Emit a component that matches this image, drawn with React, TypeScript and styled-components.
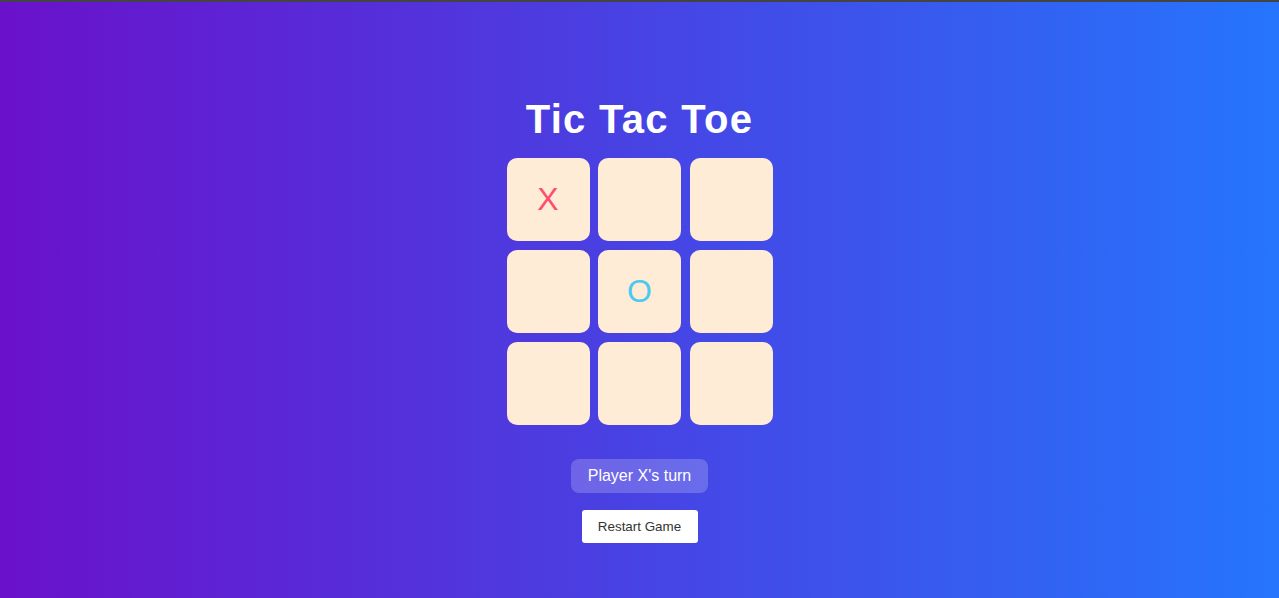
import React, { useState } from 'react';
import styled, { createGlobalStyle } from 'styled-components';

const GlobalStyle = createGlobalStyle`
  html, body {
    margin: 0;
    padding: 0;
    height: 100%;
  }
  body {
    font-family: 'Liberation Sans', Arial, sans-serif;
    background: linear-gradient(to right, #6a11cb, #2575fc);
  }
`;

type Mark = 'X' | 'O' | null;

const Page = styled.div`
  box-sizing: border-box;
  min-height: 100vh;
  border-top: 2px solid #444;
  background: linear-gradient(to right, #6a11cb, #2575fc);
  display: flex;
  flex-direction: column;
  align-items: center;
  padding-top: 94px;
  color: #fff;
`;

const Title = styled.h1`
  margin: 0 0 16px;
  font-size: 40px;
  line-height: 46px;
  font-weight: 700;
  letter-spacing: 1.3px;
`;

const Board = styled.div`
  display: grid;
  grid-template-columns: repeat(3, 83px);
  grid-auto-rows: 83px;
  gap: 9px 8.5px;
`;

const Cell = styled.button<{ $mark: Mark }>`
  border: none;
  border-radius: 10px;
  background: #ffecd6;
  padding: 0;
  font-family: 'Liberation Sans', Arial, sans-serif;
  font-size: 32px;
  color: ${(p) => (p.$mark === 'X' ? '#ff4d6d' : '#4cc9f0')};
  cursor: pointer;
  display: flex;
  align-items: center;
  justify-content: center;
`;

const Status = styled.div`
  margin-top: 34px;
  padding: 8px 17px;
  font-size: 16px;
  line-height: 18px;
  border-radius: 8px;
  background: rgba(255, 255, 255, 0.2);
`;

const RestartButton = styled.button`
  margin-top: 17px;
  width: 116px;
  height: 33px;
  border: none;
  border-radius: 3px;
  background: #fff;
  color: #333;
  font-family: 'Liberation Sans', Arial, sans-serif;
  font-size: 13.4px;
  cursor: pointer;
`;

const initial: Mark[] = ['X', null, null, null, 'O', null, null, null, null];

function App() {
  const [cells, setCells] = useState<Mark[]>(initial);
  const xCount = cells.filter((c) => c === 'X').length;
  const oCount = cells.filter((c) => c === 'O').length;
  const turn = xCount > oCount ? 'O' : 'X';

  const play = (i: number) => {
    if (cells[i]) return;
    const next = cells.slice();
    next[i] = turn;
    setCells(next);
  };

  return (
    <>
      <GlobalStyle />
      <Page>
        <Title>Tic Tac Toe</Title>
        <Board>
          {cells.map((mark, i) => (
            <Cell key={i} $mark={mark} onClick={() => play(i)}>
              {mark}
            </Cell>
          ))}
        </Board>
        <Status>Player {turn}'s turn</Status>
        <RestartButton onClick={() => setCells(initial)}>Restart Game</RestartButton>
      </Page>
    </>
  );
}

export default App;
